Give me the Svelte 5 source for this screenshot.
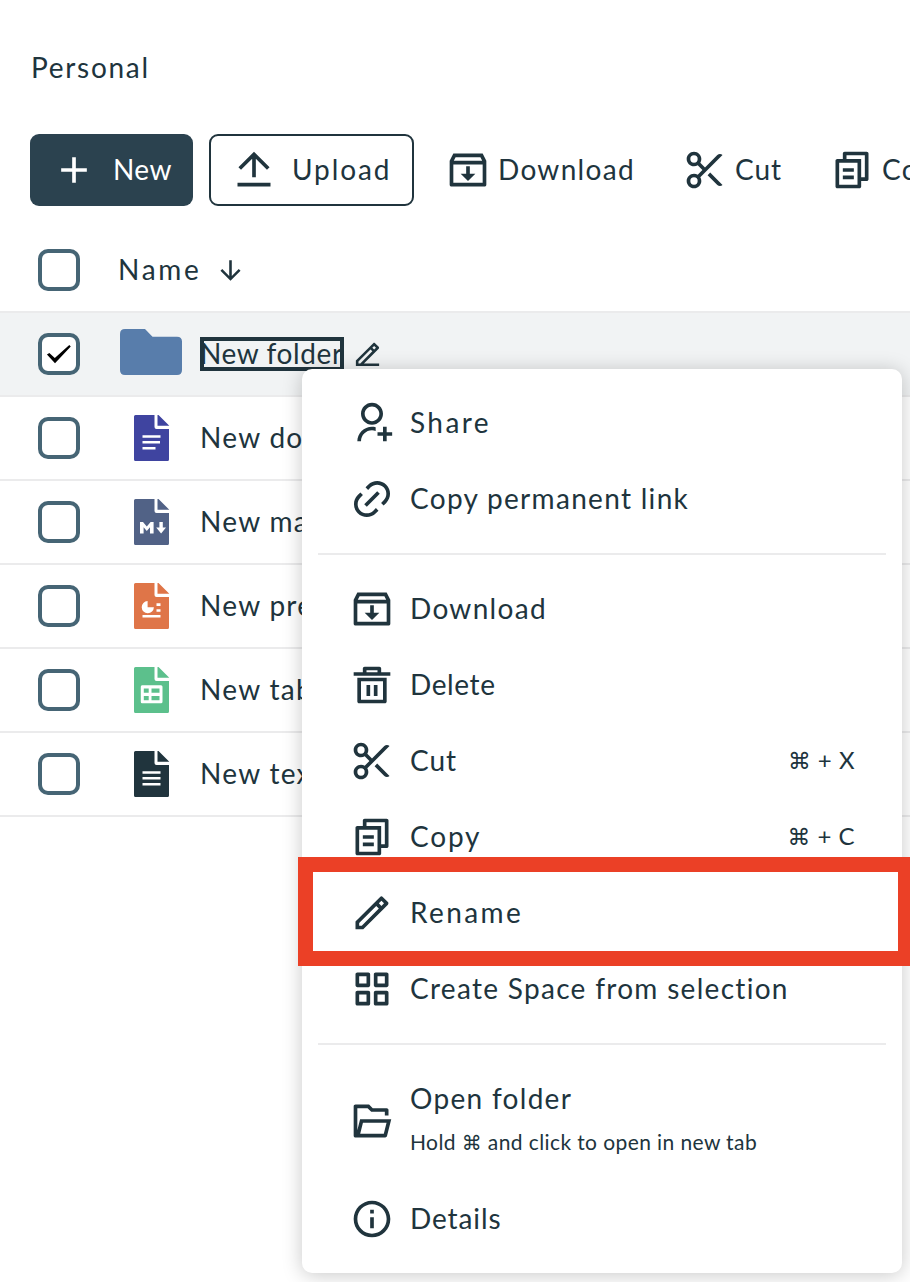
<script>
  const icons = {
    add: 'M11 11V5H13V11H19V13H13V19H11V13H5V11H11Z',
    upload: 'M3 19H21V21H3V19ZM13 5.83V16H11V5.83L4.93 11.9L3.51 10.49L12 2L20.49 10.49L19.07 11.9L13 5.83Z',
    download: 'M20 3L22 7V20C22 20.55 21.55 21 21 21H3C2.45 21 2 20.55 2 20V7L4 3H20ZM20 9H4V19H20V9ZM13 10V14H16L12 18L8 14H11V10H13ZM18.76 5H5.24L4.24 7H19.76L18.76 5Z',
    cut: 'M9.446 8.032L12 10.586L18.728 3.858C19.509 3.077 20.775 3.077 21.556 3.858L9.446 15.968C9.798 16.561 10 17.257 10 18C10 20.209 8.209 22 6 22C3.791 22 2 20.209 2 18C2 15.791 3.791 14 6 14C6.743 14 7.439 14.203 8.032 14.555L10.586 12L8.032 9.446C7.439 9.798 6.742 10 6 10C3.791 10 2 8.209 2 6C2 3.791 3.791 2 6 2C8.209 2 10 3.791 10 6C10 6.742 9.798 7.439 9.446 8.032ZM14.826 13.411L21.556 20.142C20.775 20.923 19.509 20.923 18.728 20.142L13.411 14.826L14.826 13.411ZM6 8A2 2 0 1 0 6 4A2 2 0 0 0 6 8ZM6 20A2 2 0 1 0 6 16A2 2 0 0 0 6 20Z',
    copy: 'M7 6V3C7 2.45 7.45 2 8 2H20C20.55 2 21 2.45 21 3V17C21 17.55 20.55 18 20 18H17V21C17 21.55 16.55 22 15.99 22H4.01C3.45 22 3 21.56 3 21V7C3 6.45 3.45 6 4.01 6H7ZM5 8V20H15V8H5ZM9 6H17V16H19V4H9V6ZM7 11H13V13H7V11ZM7 15H13V17H7V15Z',
    share: 'M14 14.252V16.341C13.374 16.12 12.701 16 12 16C8.686 16 6 18.686 6 22H4C4 17.582 7.582 14 12 14C12.691 14 13.361 14.088 14 14.252ZM12 13C8.685 13 6 10.315 6 7C6 3.685 8.685 1 12 1C15.315 1 18 3.685 18 7C18 10.315 15.315 13 12 13ZM12 11C14.21 11 16 9.21 16 7C16 4.79 14.21 3 12 3C9.79 3 8 4.79 8 7C8 9.21 9.79 11 12 11ZM18 17V14H20V17H23V19H20V22H18V19H15V17H18Z',
    link: 'M18.364 15.536L16.95 14.121L18.364 12.707C20.316 10.755 20.316 7.589 18.364 5.636C16.411 3.683 13.245 3.683 11.293 5.636L9.878 7.05L8.464 5.636L9.878 4.222C12.612 1.488 17.044 1.488 19.778 4.222C22.512 6.955 22.512 11.388 19.778 14.121L18.364 15.536ZM15.535 18.364L14.121 19.778C11.388 22.512 6.955 22.512 4.222 19.778C1.488 17.044 1.488 12.612 4.222 9.879L5.636 8.464L7.05 9.879L5.636 11.293C3.683 13.245 3.683 16.411 5.636 18.364C7.588 20.317 10.754 20.317 12.707 18.364L14.121 16.95L15.535 18.364ZM14.828 7.757L16.243 9.172L9.171 16.243L7.757 14.828L14.828 7.757Z',
    trash: 'M4 8H20V21C20 21.55 19.55 22 19 22H5C4.45 22 4 21.55 4 21V8ZM6 10V20H18V10H6ZM9 12H11V18H9V12ZM13 12H15V18H13V12ZM7 5V3C7 2.45 7.45 2 8 2H16C16.55 2 17 2.45 17 3V5H22V7H2V5H7ZM9 4V5H15V4H9Z',
    rename: 'M15.728 9.576L14.314 8.162L5 17.476V18.89H6.414L15.728 9.576ZM17.142 8.162L18.556 6.748L17.142 5.334L15.728 6.748L17.142 8.162ZM7.243 20.89H3V16.647L16.435 3.212C16.826 2.822 17.459 2.822 17.849 3.212L20.678 6.041C21.068 6.431 21.068 7.064 20.678 7.455L7.243 20.89Z',
    edit: 'M15.728 9.576L14.314 8.162L5 17.476V18.89H6.414L15.728 9.576ZM17.142 8.162L18.556 6.748L17.142 5.334L15.728 6.748L17.142 8.162ZM9.243 18.89H21V20.89H3V16.647L16.435 3.212C16.826 2.822 17.459 2.822 17.849 3.212L20.678 6.041C21.068 6.431 21.068 7.064 20.678 7.455L9.243 18.89Z',
    grid: 'M4 3H10C10.55 3 11 3.45 11 4V10C11 10.55 10.55 11 10 11H4C3.45 11 3 10.55 3 10V4C3 3.45 3.45 3 4 3ZM5 5V9H9V5H5ZM14 3H20C20.55 3 21 3.45 21 4V10C21 10.55 20.55 11 20 11H14C13.45 11 13 10.55 13 10V4C13 3.45 13.45 3 14 3ZM15 5V9H19V5H15ZM4 13H10C10.55 13 11 13.45 11 14V20C11 20.55 10.55 21 10 21H4C3.45 21 3 20.55 3 20V14C3 13.45 3.45 13 4 13ZM5 15V19H9V15H5ZM14 13H20C20.55 13 21 13.45 21 14V20C21 20.55 20.55 21 20 21H14C13.45 21 13 20.55 13 20V14C13 13.45 13.45 13 14 13ZM15 15V19H19V15H15Z',
    open: 'M3 21C2.45 21 2 20.55 2 20V4C2 3.45 2.45 3 3 3H10.414L12.414 5H20C20.55 5 21 5.45 21 6V9H19V7H11.586L9.586 5H4V17L5.5 11H22.5L20.19 20.243C20.08 20.688 19.68 21 19.22 21H3ZM19.938 13H7.062L5.562 19H18.438L19.938 13Z',
    info: 'M12 22C6.477 22 2 17.523 2 12C2 6.477 6.477 2 12 2C17.523 2 22 6.477 22 12C22 17.523 17.523 22 12 22ZM12 20C16.418 20 20 16.418 20 12C20 7.582 16.418 4 12 4C7.582 4 4 7.582 4 12C4 16.418 7.582 20 12 20ZM11 7H13V9H11V7ZM11 11H13V17H11V11Z',
    down: 'M13 16.172L18.364 10.808L19.778 12.222L12 20L4.222 12.222L5.636 10.808L11 16.172V4H13V16.172Z'
  };

  const files = [
    { name: 'New document', kind: 'doc', color: '#3f44a0' },
    { name: 'New markdown', kind: 'md', color: '#516286' },
    { name: 'New presentation', kind: 'slides', color: '#df7548' },
    { name: 'New table', kind: 'sheet', color: '#5cc08c' },
    { name: 'New text file', kind: 'text', color: '#20343d' }
  ];

  const groups = [
    [
      { icon: 'share', label: 'Share' },
      { icon: 'link', label: 'Copy permanent link' }
    ],
    [
      { icon: 'download', label: 'Download' },
      { icon: 'trash', label: 'Delete' },
      { icon: 'cut', label: 'Cut', key: 'X' },
      { icon: 'copy', label: 'Copy', key: 'C' },
      { icon: 'rename', label: 'Rename', marked: true },
      { icon: 'grid', label: 'Create Space from selection' }
    ],
    [
      { icon: 'open', label: 'Open folder', hint: true },
      { icon: 'info', label: 'Details' }
    ]
  ];
</script>

{#snippet icon(name, size = 44)}
  <svg class="icon" width={size} height={size} viewBox="0 0 24 24" fill="currentColor" fill-rule="evenodd" aria-hidden="true"><path d={icons[name]} /></svg>
{/snippet}

<main>
  <h1>Personal</h1>

  <div class="toolbar">
    <button class="btn primary">{@render icon('add')}<span>New</span></button>
    <button class="btn outline">{@render icon('upload')}<span>Upload</span></button>
    <button class="btn plain dl">{@render icon('download')}<span>Download</span></button>
    <button class="btn plain ct">{@render icon('cut')}<span>Cut</span></button>
    <button class="btn plain cp">{@render icon('copy')}<span>Copy</span></button>
  </div>

  <div class="table">
    <div class="row head">
      <span class="check"></span>
      <span class="title">Name</span>
      {@render icon('down', 31)}
    </div>
    <div class="row selected">
      <span class="check">
        <svg width="28" height="21" viewBox="0 0 26 20"><path d="M1.5 10 3.8 8.6 9 13.3 22.8 1 24.2 2.4 9.2 18.4Z" /></svg>
      </span>
      <span class="thumb">
        <svg width="62" height="46" viewBox="0 0 62 46"><path fill="#587dab" d="M5 0H25L32.500 7.800H57Q62 7.800 62 12.500V41Q62 46 57 46H5Q0 46 0 41V5Q0 0 5 0Z" /></svg>
      </span>
      <span class="name focus">New folder</span>
      <span class="edit">{@render icon('edit', 31)}</span>
    </div>
    {#each files as f}
      <div class="row">
        <span class="check"></span>
        <span class="thumb file">
          <svg width="36" height="46" viewBox="0 0 36 46">
            <path fill={f.color} d="M1.500 0H20.500V12Q20.500 14 22.500 14H35V44.500Q35 46 33.500 46H1.500Q0 46 0 44.500V1.500Q0 0 1.500 0ZM23.500 0H24.500L35.300 10.800H23.500Z" />
            {#if f.kind === 'doc' || f.kind === 'text'}
              <path stroke="#fff" stroke-width="2.6" d={f.kind === 'doc' ? 'M8.500 21.500H26.500M8.500 27.300H26M8.500 33.200H21.500' : 'M8.500 21.500H26.500M8.500 27.300H26.500M8.500 33.200H26.500'} />
            {:else if f.kind === 'md'}
              <path fill="#fff" d="M6 34.500V23H9L12.800 27.500 16.600 23H19.600V34.500H16V28.300L12.800 32 9.600 28.300V34.500ZM25.400 23H28.800V28.500H32L27.100 34.500 22.200 28.500H25.400Z" />
            {:else if f.kind === 'slides'}
              <path fill="#fff" d="M13.600 18V24.300H19.900A6.100 6.100 0 1 1 13.600 18ZM22.500 20.300H26.500V22.900H22.500ZM22.500 26.200H26.500V28.800H22.500ZM8.500 32H26.500V34.600H8.500Z" />
            {:else}
              <path fill="#fff" fill-rule="evenodd" d="M8 18.200H27Q28.500 18.200 28.500 19.700V34.800Q28.500 36.300 27 36.300H8Q6.800 36.300 6.800 34.800V19.700Q6.800 18.200 8 18.200ZM9.800 21.500V25.800H14.700V21.500ZM17.500 21.500V25.800H25.500V21.500ZM9.800 29V33.300H14.700V29ZM17.500 29V33.300H25.500V29Z" />
            {/if}
          </svg>
        </span>
        <span class="name">{f.name}</span>
      </div>
    {/each}
  </div>

  <div class="menu">
    {#each groups as group, i}
      {#if i > 0}<hr />{/if}
      {#each group as item}
        <div class="item" class:tall={item.hint} class:marked={item.marked}>
          {@render icon(item.icon)}
          <div class="label">
            <span class={'t ' + item.icon}>{item.label}</span>
            {#if item.hint}<small>Hold <b>⌘</b> and click to open in new tab</small>{/if}
          </div>
          {#if item.key}<kbd><b>⌘</b> + {item.key}</kbd>{/if}
        </div>
      {/each}
    {/each}
  </div>
</main>

<style>
  :global(body) { background: #fff; }
  main {
    position: relative;
    box-sizing: border-box;
    width: 910px;
    height: 1282px;
    padding-top: 47px;
    overflow: hidden;
    color: #20343d;
    font: 28px/40px Lato, "DejaVu Sans", sans-serif;
    letter-spacing: 1.3px;
    white-space: nowrap;
  }
  h1 { margin: 0 0 47px 31px; font: inherit; letter-spacing: 1.7px; }
  .icon { display: block; flex: none; }
  .toolbar { display: flex; height: 72px; padding-left: 30px; }
  .btn {
    display: flex;
    flex: none;
    align-items: center;
    box-sizing: border-box;
    height: 72px;
    padding: 0;
    border: 0;
    background: none;
    color: inherit;
    font: inherit;
    letter-spacing: inherit;
  }
  .btn span, .title { padding-bottom: 2px; }
  .primary { width: 163px; padding-left: 22px; gap: 17px; border-radius: 9px; background: #2b424f; color: #fff; letter-spacing: 0.4px; }
  .outline { width: 205px; margin-left: 16px; padding-left: 21px; gap: 16px; border: 2px solid #20343d; border-radius: 9px; letter-spacing: 1.9px; }
  .plain { gap: 8px; }
  .dl { width: 237px; margin-left: 32px; }
  .ct { width: 147px; letter-spacing: 0.9px; }
  .table { margin-top: 23px; }
  .row {
    display: flex;
    align-items: center;
    box-sizing: border-box;
    height: 84px;
    padding-left: 38px;
    border-bottom: 2px solid #ebebec;
  }
  .selected { background: #f1f3f4; }
  .check {
    display: grid;
    place-items: center;
    flex: none;
    box-sizing: border-box;
    width: 42px;
    height: 42px;
    border: 4px solid #466575;
    border-radius: 10px;
    background: #fff;
  }
  .title { width: 97px; margin-left: 38px; letter-spacing: 2.7px; }
  .thumb { display: grid; place-items: center; width: 63px; margin: 0 18px 0 39px; }
  .thumb svg { margin-top: -4px; }
  .file svg { margin: 0 0 0 2px; }
  .name { flex: none; padding-bottom: 2px; letter-spacing: 1.3px; }
  .focus {
    box-sizing: border-box;
    width: 144px;
    height: 34px;
    padding: 0;
    line-height: 32px;
    letter-spacing: 0.6px;
    outline: 4px solid #20343d;
    outline-offset: -4px;
  }
  .edit { margin-left: 8px; }
  .menu {
    position: absolute;
    left: 302px;
    top: 369px;
    box-sizing: border-box;
    width: 600px;
    height: 904px;
    padding: 16px;
    border-radius: 10px;
    background: #fff;
    box-shadow: 0 2px 20px rgba(0, 0, 0, 0.22);
  }
  hr { height: 2px; margin: 16px 0; border: 0; background: #ebebec; }
  .item { position: relative; display: flex; align-items: center; height: 76px; padding: 0 31px 0 32px; gap: 16px; }
  .tall { height: 120px; }
  .label { display: flex; flex-direction: column; flex: 1; padding-bottom: 2px; }
  .t.share, .t.rename { letter-spacing: 2.4px; }
  .t.trash { letter-spacing: 0.6px; }
  .t.cut, .t.info { letter-spacing: 0.9px; }
  .t.copy { letter-spacing: 1.8px; }
  small { margin-top: 4px; font-size: 21px; letter-spacing: 0.4px; }
  b { font: 0.95em "DejaVu Sans", sans-serif; line-height: 1; }
  kbd { padding-bottom: 3px; font: 24px/40px Lato, sans-serif; letter-spacing: 0.5px; }
  .marked::after {
    content: "";
    position: absolute;
    left: -20px;
    top: -18px;
    z-index: 1;
    box-sizing: border-box;
    width: 615px;
    height: 109px;
    border: 15px solid #eb4026;
  }
</style>
